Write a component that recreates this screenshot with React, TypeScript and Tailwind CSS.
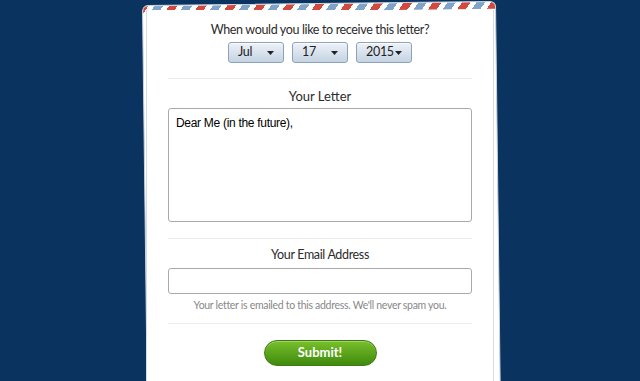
import React from "react";

const stripe =
  "repeating-linear-gradient(-55deg, #d4493d 0px, #d4493d 7px, #ffffff 7px, #ffffff 12px, #7fa3c9 12px, #7fa3c9 19px, #ffffff 19px, #ffffff 24px)";

function Select({ label }: { label: string }) {
  return (
    <div className="flex h-[21px] w-[56px] items-center justify-between rounded-[3px] border border-[#8ea3bb] bg-gradient-to-b from-[#edf2f7] to-[#c4d3e3] pl-[9px] pr-[9px] text-[12.5px] tracking-[-0.3px] text-[#222] shadow-[inset_0_1px_0_rgba(255,255,255,0.8)]">
      <span>{label}</span>
      <svg width="7" height="4" viewBox="0 0 7 4">
        <path d="M0 0 H7 L3.5 4 Z" fill="#222" />
      </svg>
    </div>
  );
}

export default function App() {
  return (
    <div
      className="h-[381px] w-full overflow-hidden bg-[#0b3360]"
      style={{ fontFamily: "Lato, 'Open Sans', sans-serif" }}
    >
      <div className="relative mx-auto w-[348px] pt-[10px]">
        {/* back sheet */}
        <div className="absolute -left-[4px] -right-[2px] top-[3px] -bottom-[40px] origin-top -rotate-[0.7deg] overflow-hidden rounded-t-[6px] border border-[#c9d3de] bg-white">
          <div className="h-[7px] w-full" style={{ background: stripe }} />
        </div>
        {/* front card */}
        <div className="relative flex h-[371px] flex-col items-center border-x border-[#d5dbe2] bg-white px-[21px] pt-[12px]">
          <div className="text-[12.5px] leading-[16px] tracking-[-0.35px] text-[#2b2b2b]">
            When would you like to receive this letter?
          </div>
          <div className="mt-[4px] flex gap-[8px]">
            <Select label="Jul" />
            <Select label="17" />
            <Select label="2015" />
          </div>
          <div className="mt-[15px] h-px w-full bg-[#ececec]" />
          <div className="mt-[9px] text-[13px] leading-[16px] text-[#2b2b2b]">
            Your Letter
          </div>
          <div
            className="mt-[4px] h-[114px] w-full rounded-[3px] border border-[#a9a9a9] px-[7px] pt-[5px] text-[12px] tracking-[-0.3px] text-black"
            style={{ fontFamily: "'Liberation Sans', Arial, sans-serif" }}
          >
            Dear Me (in the future),
          </div>
          <div className="mt-[16px] h-px w-full bg-[#ececec]" />
          <div className="mt-[8px] text-[12.5px] leading-[16px] tracking-[-0.35px] text-[#2b2b2b]">
            Your Email Address
          </div>
          <div className="mt-[5px] h-[26px] w-full rounded-[3px] border border-[#a9a9a9]" />
          <div className="mt-[5px] text-[10.5px] leading-[12px] tracking-[-0.3px] text-[#888]">
            Your letter is emailed to this address. We'll never spam you.
          </div>
          <div className="mt-[12px] h-px w-full bg-[#ececec]" />
          <div className="mt-[16px] flex h-[26px] w-[113px] items-center justify-center rounded-full border border-[#3f7a12] bg-gradient-to-b from-[#78c02a] to-[#3f8a0c] text-[13px] font-bold text-white shadow-[inset_0_1px_0_rgba(255,255,255,0.3)]">
            Submit!
          </div>
        </div>
      </div>
    </div>
  );
}
